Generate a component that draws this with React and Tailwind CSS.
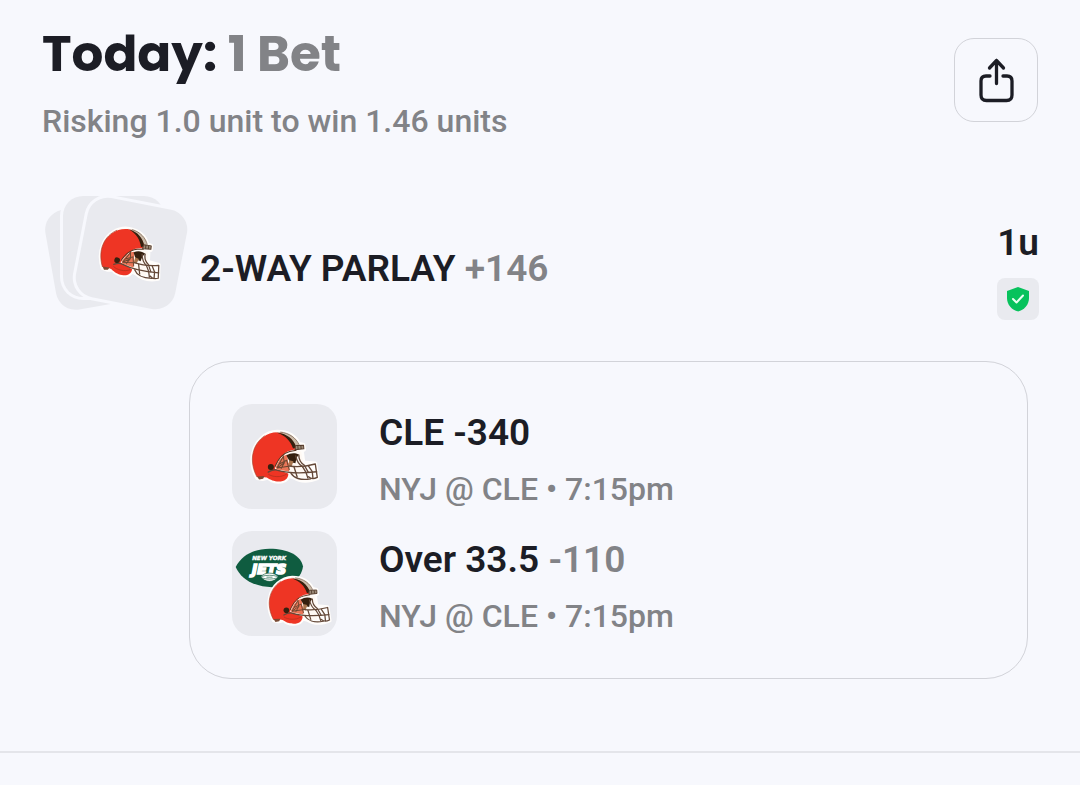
import clsx from 'clsx';

const legs = [
  { id: 1, pick: 'CLE -340', odds: null, game: 'NYJ @ CLE • 7:15pm', logo: 'browns' },
  { id: 2, pick: 'Over 33.5', odds: '-110', game: 'NYJ @ CLE • 7:15pm', logo: 'matchup' }
];

function BrownsHelmet({ className }) {
  return (
    <svg viewBox="84 104 208 164" className={className} aria-hidden="true">
      {/* white keyline around the whole mark */}
      <g fill="#fffdfb" stroke="#fffdfb" strokeWidth="11" strokeLinejoin="round">
        <path d="M105 250 C92 226 88 198 93 176 C100 140 130 113 165 112 C198 112 220 128 230 148 L243 151 L245 165 L238 169 L243 203 L278 206 L285 250 L266 256 C246 260 226 256 214 248 L198 244 C194 256 184 261 168 261 C154 260 144 256 138 249 L121 253 Z" />
      </g>
      {/* shell */}
      <path d="M105 247 C93 225 88 198 93 176 C100 141 131 114 165 114 C196 114 217 131 226 154 L220 165 C206 166 192 171 186 178 C182 190 172 202 161 210 L158 222 L198 236 C198 252 186 260 170 260 C154 259 146 256 134 248 C124 246 117 246 105 247 Z" fill="#ee3524" />
      <path d="M105 247 C93 225 88 198 93 176 C97 155 110 136 128 124" fill="none" stroke="#a8402a" strokeWidth="2" />
      <path d="M138 238 C150 247 176 249 193 238" fill="none" stroke="#a8301c" strokeWidth="2" />
      {/* centre stripe */}
      <path d="M160 113 C194 111 220 127 229 151 L222 158 C211 134 192 119 160 113 Z" fill="#cbbba9" />
      <path d="M165 115 C192 117 213 133 222 158 L212 162 C204 139 190 124 165 115 Z" fill="#35200f" />
      <path d="M174 113 C202 116 221 131 230 151" fill="none" stroke="#6b4f3a" strokeWidth="2" />
      <path d="M219 153 L243 152 L244 163 L218 166 Z" fill="#9c8a78" stroke="#5a4030" strokeWidth="3" strokeLinejoin="round" />
      <path d="M226 153 L227 164 M235 153 L236 163" stroke="#35200f" strokeWidth="2" />
      {/* face opening */}
      <path d="M160 216 C170 190 182 174 220 168 L236 171 L242 203 L244 248 L216 246 L198 236 Z" fill="#fff9f3" />
      <path d="M160 218 L171 197 L183 184 L195 180 L197 202 L202 210 L200 230 L164 224 Z" fill="#ea7658" />
      <path d="M192 183 C204 174 218 174 229 180 L222 190 L219 206 L203 202 Z" fill="#35200f" />
      <path d="M200 197 L213 200 L207 218 L200 210 Z" fill="#a8764e" />
      <path d="M158 216 C168 193 180 176 202 171 L222 167" fill="none" stroke="#5a3420" strokeWidth="3" />
      <path d="M164 220 L183 185 L186 204 L164 220 L199 215 M171 208 L193 197 L201 226 M176 222 L186 204" fill="none" stroke="#6a4630" strokeWidth="3" />
      {/* face mask */}
      <g fill="none" stroke="#644838" strokeWidth="4" strokeLinecap="round" strokeLinejoin="round">
        <path d="M138 232 C152 224 158 224 164 226 C198 236 240 236 282 231" />
        <path d="M201 214 C226 218 252 215 278 208 L284 248 C274 253 264 252 258 246" />
        <path d="M229 181 C229 194 234 204 245 211 L257 232" />
        <path d="M220 184 C223 200 230 210 240 216" />
        <path d="M206 236 C214 249 234 258 264 252" />
        <path d="M215 217 L224 246 M240 216 L250 232 L256 250 M258 214 L269 231 L271 250" />
      </g>
      <circle cx="146" cy="217" r="9" fill="#35200f" />
      <path d="M105 245 L127 244 L123 252 L111 254 Z" fill="#7a4a34" />
    </svg>
  );
}

function JetsLogo({ className }) {
  return (
    <svg viewBox="38 77 208 120" className={className} aria-hidden="true">
      <path d="M40 134 C58 100 94 79 142 79 C198 79 238 100 243 133 C238 172 200 195 150 195 C96 194 57 172 40 134 Z" fill="#0f5c40" />
      <g fill="#ffffff" stroke="#ffffff" fontFamily="'DejaVu Sans', sans-serif" fontWeight="700" fontStyle="italic" textAnchor="middle">
        <text x="141" y="113" fontSize="17" strokeWidth="1">NEW YORK</text>
        <text x="141" y="156" fontSize="42" strokeWidth="5">JETS</text>
      </g>
      {/* football */}
      <path d="M116 164 C126 149 158 149 168 164 C158 182 126 182 116 164 Z" fill="#ffffff" stroke="#0f5c40" strokeWidth="2" />
      <path d="M118 163 C130 158 154 158 166 163 M118 167 C130 172 154 172 166 167 M133 165 H151" fill="none" stroke="#0f5c40" strokeWidth="2" />
    </svg>
  );
}

function LogoTile({ logo }) {
  return (
    <div className="relative flex size-[105px] shrink-0 items-center justify-center rounded-[20px] bg-[#e9eaef]">
      {logo === 'browns' ? (
        <BrownsHelmet className="w-[70px]" />
      ) : (
        <>
          <JetsLogo className="absolute top-[17px] left-[3px] w-[69px]" />
          <BrownsHelmet className="absolute right-[5px] bottom-[10px] w-[65px]" />
        </>
      )}
    </div>
  );
}

function CardStack() {
  const card = 'absolute size-[101px] rounded-[20px] bg-[#e9eaef]';
  return (
    <div className="relative h-[126px] w-[148px] shrink-0">
      <div className={clsx(card, 'top-[10px] left-[8px] -rotate-[10deg]')} />
      <div className={clsx(card, 'top-[2px] left-[21px] ring-3 ring-[#f7f8fd]')} />
      <div className={clsx(card, 'top-[9px] left-[39px] flex rotate-[11deg] items-center justify-center ring-3 ring-[#f7f8fd]')}>
        <BrownsHelmet className="w-[66px]" />
      </div>
    </div>
  );
}

export default function App() {
  return (
    <main className="min-h-screen bg-[#f7f8fd] font-[Roboto,sans-serif] font-medium text-[#1c1d25]">
      {/* HEADER */}
      <header className="flex items-start justify-between pt-[38px] pr-[42px] pl-[42px]">
        <div>
          <h1 className="-mt-2 font-[Poppins,Inter,sans-serif] text-[50px] leading-[48px] font-bold">
            Today: <span className="text-[#828387]">1 Bet</span>
          </h1>
          <p className="mt-6 text-[32px] leading-[38px] text-[#828387]">Risking 1.0 unit to win 1.46 units</p>
        </div>
        <button type="button" aria-label="Share" className="flex size-[84px] items-center justify-center rounded-[20px] border border-[#d2d3d9]">
          <svg viewBox="0 0 36 46" className="h-[46px] w-[36px]" fill="none" stroke="currentColor" strokeWidth="3.300" strokeLinecap="round" strokeLinejoin="round">
            <path d="M18.500 26.500 V3.500 M11.500 11 L18.500 3.500 L25.500 11" />
            <path d="M12 19 H8 Q3 19 3 24 V38 Q3 43.500 8.500 43.500 H28.500 Q34 43.500 34 38 V24 Q34 19 29 19 H25" />
          </svg>
        </button>
      </header>

      {/* BET */}
      <section className="mt-[54px] flex items-center pr-[41px] pl-[42px]">
        <CardStack />
        <h2 className="mt-6 ml-[10px] flex-1 text-[37px] leading-[42px] font-semibold">
          2-WAY PARLAY <span className="text-[#828387]">+146</span>
        </h2>
        <div className="flex flex-col items-end gap-[14px] self-end">
          <span className="text-[37px] leading-[42px] font-semibold">1u</span>
          <span className="flex size-[42px] items-center justify-center rounded-lg bg-[#e9eaef]">
            <svg viewBox="0 0 24 26" className="h-[26px] w-[24px]" aria-hidden="true">
              <path d="M12 1 L23 5 V12 C23 19 18 24 12 25.500 C6 24 1 19 1 12 V5 Z" fill="#07c25c" />
              <path d="M7 13 L10.500 16.500 L17 9.500" fill="none" stroke="#eafff2" strokeWidth="2" strokeLinecap="round" strokeLinejoin="round" />
            </svg>
          </span>
        </div>
      </section>

      {/* LEGS */}
      <ul className="mt-[41px] mr-[52px] ml-[189px] flex flex-col gap-[22px] rounded-[42px] border border-[#d2d3d9] p-[42px]">
        {legs.map(leg => (
          <li key={leg.id} className="flex items-start gap-[42px]">
            <LogoTile logo={leg.logo} />
            <div className="pt-2">
              <p className="text-[37px] leading-[42px] font-semibold">
                {leg.pick} {leg.odds && <span className="text-[#828387]">{leg.odds}</span>}
              </p>
              <p className="mt-4 text-[32px] leading-[38px] text-[#828387]">{leg.game}</p>
            </div>
          </li>
        ))}
      </ul>

      <hr className="mt-[72px] border-t-2 border-[#e4e5ea]" />
    </main>
  );
}
